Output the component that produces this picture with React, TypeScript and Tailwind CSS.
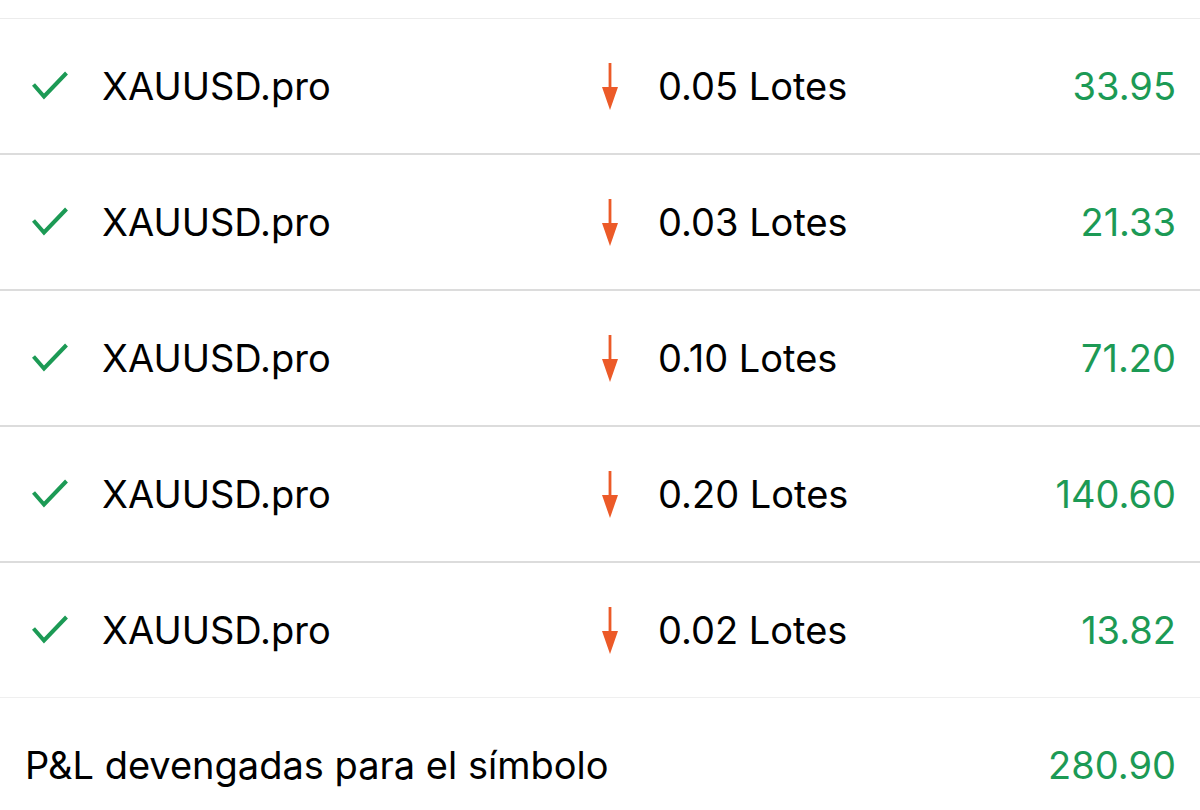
import React from "react";

const rows = [
  { lots: "0.05", value: "33.95" },
  { lots: "0.03", value: "21.33" },
  { lots: "0.10", value: "71.20" },
  { lots: "0.20", value: "140.60" },
  { lots: "0.02", value: "13.82" },
];

function Check() {
  return (
    <svg width="36" height="30" viewBox="0 0 36 30" className="block">
      <path d="M1.5 13.5 L12 25.5 L34.5 2" fill="none" stroke="#1c9a55" strokeWidth="4" strokeLinecap="butt" strokeLinejoin="miter" />
    </svg>
  );
}

function ArrowDown() {
  return (
    <svg width="20" height="48" viewBox="0 0 20 48" className="block">
      <rect x="8.6" y="0" width="2.8" height="30" fill="#ec5a28" />
      <path d="M2 24 L18 24 L10 47 Z" fill="#ec5a28" />
    </svg>
  );
}

export default function App() {
  return (
    <div
      className="w-[1200px] h-[810px] bg-white overflow-hidden text-black"
      style={{ fontFamily: "Inter, 'Liberation Sans', sans-serif" }}
    >
      <div className="h-[19px] border-b border-[#ececec]" />
      {rows.map((r, i) => (
        <div
          key={i}
          className={
            i === rows.length - 1
              ? "h-[135px] flex items-center border-b border-[#efefef]"
              : "h-[136px] flex items-center border-b-2 border-[#dcdcdc]"
          }
        >
          <div className="pl-[32px] w-[102px] shrink-0">
            <Check />
          </div>
          <div className="w-[498px] shrink-0 text-[38px] leading-none">XAUUSD.pro</div>
          <div className="w-[20px] shrink-0 mt-[2px]">
            <ArrowDown />
          </div>
          <div className="ml-[38px] flex-1 text-[38px] leading-none">{r.lots} Lotes</div>
          <div className="pr-[24px] text-[38px] leading-none text-[#1c9a55]">{r.value}</div>
        </div>
      ))}
      <div className="flex items-center justify-between pl-[25px] pr-[24px] pt-[48px]">
        <div className="text-[38px] leading-none">P&amp;L devengadas para el símbolo</div>
        <div className="text-[38px] leading-none text-[#1c9a55]">280.90</div>
      </div>
    </div>
  );
}
